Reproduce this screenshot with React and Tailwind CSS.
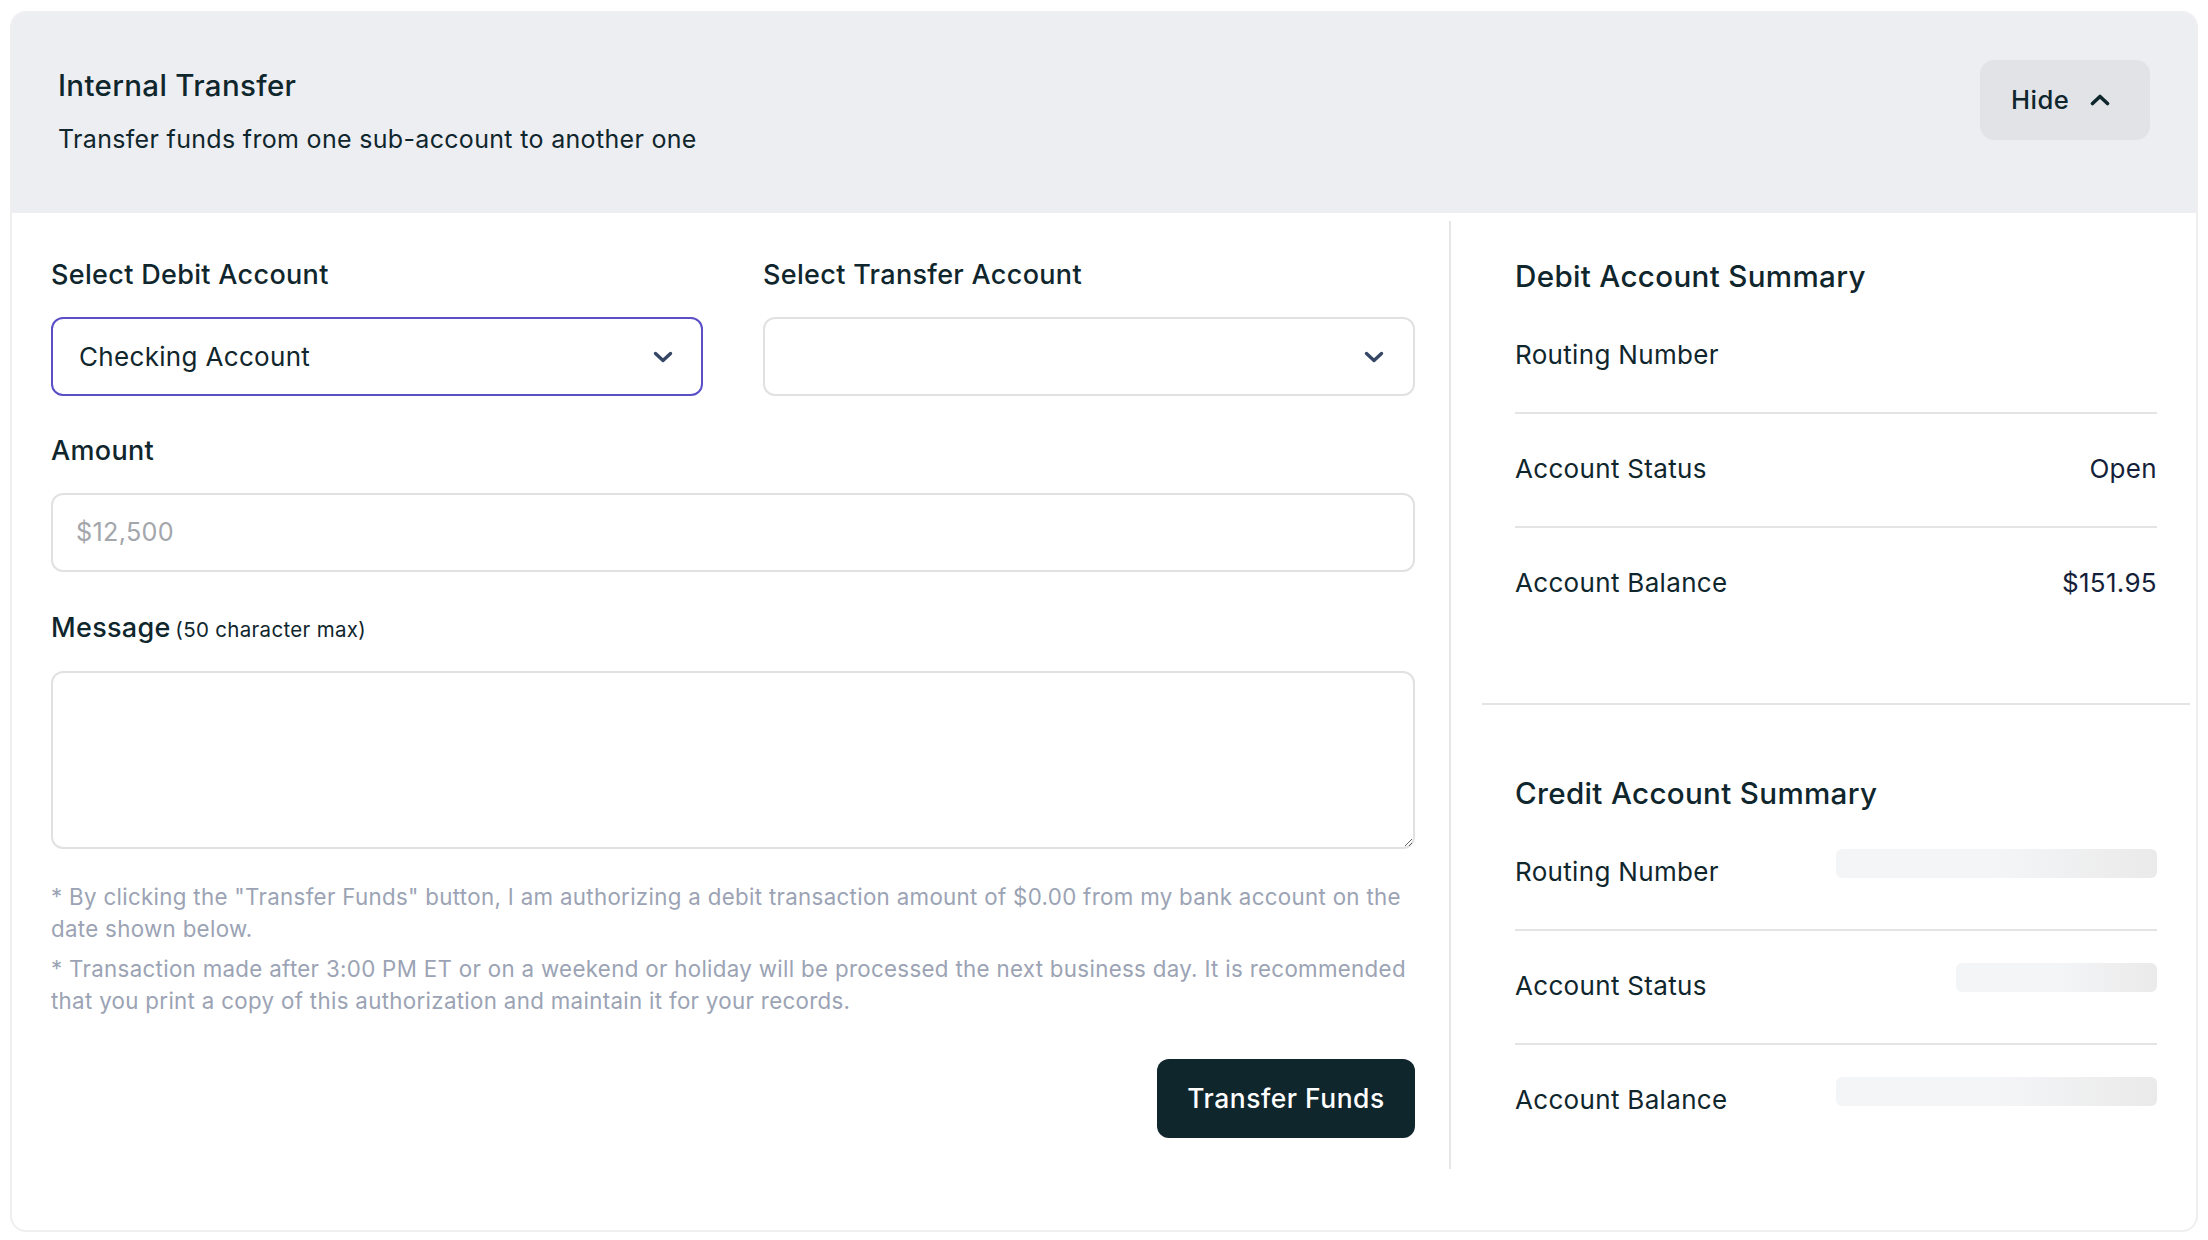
import React from "react";

const font = { fontFamily: "Inter, 'Noto Sans', sans-serif" };

function ChevronDown() {
  return (
    <svg width="20" height="12" viewBox="0 0 20 12" fill="none">
      <path d="M2.5 2.5 L10 9.5 L17.5 2.5" stroke="#364766" strokeWidth="3.4" strokeLinecap="round" strokeLinejoin="round" />
    </svg>
  );
}

function ChevronUp() {
  return (
    <svg width="20" height="12" viewBox="0 0 20 12" fill="none">
      <path d="M2.5 9.5 L10 2.5 L17.5 9.5" stroke="#10262d" strokeWidth="3.6" strokeLinecap="round" strokeLinejoin="round" />
    </svg>
  );
}

function Row({ label, value, skeleton, last }) {
  return (
    <div className={`flex justify-between items-start pt-[37px] ${last ? "" : "pb-[39px] border-b-2 border-[#e4e4e4]"}`}>
      <span className="text-[26px] leading-[36px] text-[#10262d]">{label}</span>
      {value && <span className="text-[26px] leading-[36px] text-[#151f3a]">{value}</span>}
      {skeleton && (
        <div
          className="h-[29px] mt-[-5px] rounded-[6px] bg-gradient-to-r from-[#f4f5f7] from-50% to-[#eaeaea]"
          style={{ width: skeleton }}
        />
      )}
    </div>
  );
}

export default function App() {
  return (
    <div style={font} className="w-[2208px] h-[1240px] bg-white pt-[11px] px-[10px] pb-[8px] text-[#10262d] tracking-[0.02em]">
      <div className="h-full rounded-[16px] border-2 border-[#efefef] overflow-hidden flex flex-col">
        {/* Header */}
        <div className="h-[200px] bg-[#edeef2] flex justify-between items-start pl-[46px] pr-[46px] shrink-0">
          <div className="pt-[54px]">
            <div className="text-[29.5px] leading-[36px] font-medium">Internal Transfer</div>
            <div className="text-[25px] leading-[32px] mt-[20px]">Transfer funds from one sub-account to another one</div>
          </div>
          <button className="mt-[47px] w-[170px] h-[80px] rounded-[14px] bg-[#e2e3e7] flex items-center pl-[31px] gap-[21px] text-[25.6px] font-medium tracking-[0.02em]">
            <span>Hide</span>
            <ChevronUp />
          </button>
        </div>

        {/* Body */}
        <div className="flex flex-1 pt-[8px] pb-[61px]">
          {/* Left column */}
          <div className="w-[1439px] shrink-0 pl-[39px] pr-[34px] border-r-2 border-[#e6e6e6] pt-[36px]">
            <div className="grid grid-cols-2 gap-x-[60px]">
              <div>
                <div className="text-[27px] leading-[36px] font-medium">Select Debit Account</div>
                <div className="mt-[24px] h-[79px] rounded-[12px] border-[2.5px] border-[#5a4fc6] flex items-center justify-between pl-[26px] pr-[28px]">
                  <span className="text-[26px] text-[#10262d]">Checking Account</span>
                  <ChevronDown />
                </div>
              </div>
              <div>
                <div className="text-[27px] leading-[36px] font-medium">Select Transfer Account</div>
                <div className="mt-[24px] h-[79px] rounded-[12px] border-2 border-[#e1e1e1] flex items-center justify-end pr-[29px]">
                  <ChevronDown />
                </div>
              </div>
            </div>

            <div className="mt-[37px] text-[27px] leading-[36px] font-medium">Amount</div>
            <div className="mt-[24px] h-[79px] rounded-[12px] border-2 border-[#e1e1e1] flex items-center pl-[23px]">
              <span className="text-[25.2px] text-[#a3a6ab]">$12,500</span>
            </div>

            <div className="mt-[38px] leading-[36px] font-medium">
              <span className="text-[27px]">Message</span>{" "}
              <span className="text-[20.5px] font-normal">(50 character max)</span>
            </div>
            <textarea className="mt-[22px] block w-full h-[178px] rounded-[12px] border-2 border-[#e1e1e1] outline-none" />

            <div className="mt-[32px] text-[22.3px] leading-[32px] text-[#9ba3b4]">
              <p>* By clicking the "Transfer Funds" button, I am authorizing a debit transaction amount of $0.00 from my bank account on the date shown below.</p>
              <p className="mt-[8px]">* Transaction made after 3:00 PM ET or on a weekend or holiday will be processed the next business day. It is recommended that you print a copy of this authorization and maintain it for your records.</p>
            </div>

            <div className="mt-[42px] flex justify-end">
              <button className="w-[258px] h-[79px] rounded-[12px] bg-[#10262d] text-white text-[26.4px] font-medium tracking-[0.02em]">
                Transfer Funds
              </button>
            </div>
          </div>

          {/* Right column */}
          <div className="flex-1 pt-[37px]">
            <div className="pl-[64px] pr-[39px]">
              <div className="text-[29.6px] leading-[36px] font-medium">Debit Account Summary</div>
              <div className="mt-[6px]">
                <Row label="Routing Number" />
                <Row label="Account Status" value="Open" />
                <Row label="Account Balance" value="$151.95" last />
              </div>
            </div>
            <div className="mt-[102px] ml-[31px] mr-[6px] border-t-2 border-[#e4e4e4]" />
            <div className="pl-[64px] pr-[39px] pt-[70px]">
              <div className="text-[29.6px] leading-[36px] font-medium">Credit Account Summary</div>
              <div className="mt-[6px]">
                <Row label="Routing Number" skeleton={321} />
                <Row label="Account Status" skeleton={201} />
                <Row label="Account Balance" skeleton={321} last />
              </div>
            </div>
          </div>
        </div>
      </div>
    </div>
  );
}
